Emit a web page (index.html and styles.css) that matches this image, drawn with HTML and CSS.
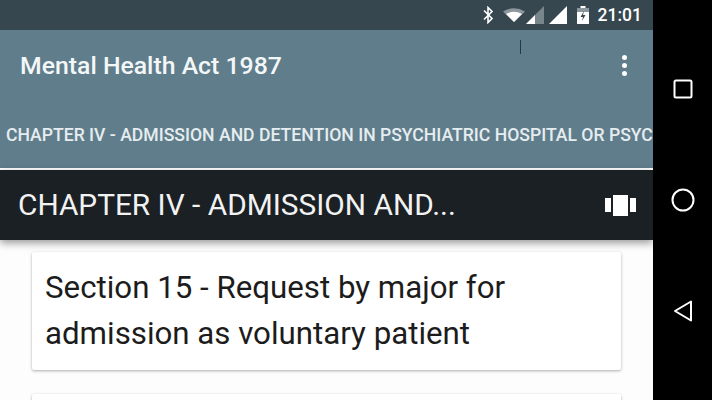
FILE: index.html
```html
<!DOCTYPE html>
<html lang="en">
<head>
<meta charset="utf-8">
<title>Mental Health Act 1987</title>
<link rel="stylesheet" href="styles.css">
</head>
<body>
<div class="device">
  <main class="screen">
    <div class="status">
      <svg class="ic-bt" viewBox="0 0 12 18" width="12" height="18"><path d="M2 4.500l8 8-4 4V1.500l4 4-8 8" fill="none" stroke="#fff" stroke-width="1.600"/></svg>
      <svg class="ic-wifi" viewBox="0 0 22 14" width="22" height="14"><path d="M0 3.500Q11-3 22 3.500L11 14Z" fill="#8b979c"/><path d="M3 6Q11 1.500 19 6L11 14Z" fill="#fff"/></svg>
      <svg class="ic-sig" viewBox="0 0 18 18" width="18" height="18"><path d="M0 18L18 0V18Z" fill="#78868c"/><path d="M0 18L9 9V18Z" fill="#fff"/></svg>
      <svg class="ic-sig2" viewBox="0 0 18 18" width="18" height="18"><path d="M0 18L18 0V18Z" fill="#fff"/></svg>
      <svg class="ic-bat" viewBox="0 0 12 18" width="12" height="18"><path d="M3.500 0h5v2H12v16H0V2h3.500z" fill="#fff"/><path d="M0 2h12v4H0z" fill="#8b979c"/><path d="M7 5L3.500 11h2.500L5 15l3.500-6H6z" fill="#37474f"/></svg>
      <span class="time">21:01</span>
    </div>
    <header class="appbar">
      <div class="toolbar">
        <h1 class="title">Mental Health Act 1987</h1>
        <span class="cursor"></span>
        <div class="menu"><i></i><i></i><i></i></div>
      </div>
      <div class="tab">CHAPTER IV - ADMISSION AND DETENTION IN PSYCHIATRIC HOSPITAL OR PSYCHIATRIC NURSING HOME</div>
      <div class="tab-line"></div>
    </header>
    <div class="chapter">
      <span class="chapter-name">CHAPTER IV - ADMISSION AND...</span>
      <svg class="carousel" viewBox="0 0 31 22" width="31" height="22"><path d="M0 4h6v14H0zM8 1h15v21H8zM25 4h6v14h-6z" fill="#fff"/></svg>
    </div>
    <div class="list">
      <article class="card">Section 15 - Request by major for admission as voluntary patient</article>
      <article class="card next"></article>
    </div>
  </main>
  <nav class="nav">
    <svg viewBox="0 0 24 24" width="24" height="24"><rect x="3.500" y="3.500" width="17" height="17" rx="1.500" fill="none" stroke="#fff" stroke-width="2"/></svg>
    <svg viewBox="0 0 26 26" width="26" height="26"><circle cx="13" cy="13" r="10.500" fill="none" stroke="#fff" stroke-width="2"/></svg>
    <svg viewBox="0 0 24 24" width="24" height="24"><path d="M20 2.500V21.500L4 12Z" fill="none" stroke="#fff" stroke-width="2" stroke-linejoin="round"/></svg>
  </nav>
</div>
</body>
</html>
```

FILE: styles.css
```css
* { box-sizing: border-box; }
html, body { margin: 0; padding: 0; }
body { width: 712px; height: 400px; overflow: hidden; background: #000; font-family: Roboto, "Liberation Sans", sans-serif; }
.device { display: flex; width: 712px; height: 400px; }
.screen { width: 653px; height: 400px; display: flex; flex-direction: column; overflow: hidden; background: #fdfdfd; }
.status { height: 30px; flex: none; background: #37474f; display: flex; align-items: center; justify-content: flex-end; padding-right: 11px; color: #fff; }
.status svg { flex: none; }
.ic-bt { margin-right: 9px; }
.ic-wifi { margin-right: 1px; }
.ic-sig { margin-right: 5px; }
.ic-sig2 { margin-right: 10px; }
.ic-bat { margin-right: 9px; }
.time { font-size: 17.500px; font-weight: 500; line-height: 30px; }
.appbar { background: #607d8b; height: 140px; flex: none; display: flex; flex-direction: column; }
.toolbar { height: 70px; flex: none; display: flex; align-items: center; justify-content: space-between; padding: 2px 26px 0 20px; position: relative; }
.title { margin: 0; font-size: 24.800px; font-weight: 500; color: #f4f7f8; line-height: 68px; }
.cursor { position: absolute; left: 520px; top: 10px; width: 1px; height: 14px; background: #1f3a4a; }
.menu { display: flex; flex-direction: column; gap: 3px; margin-top: -2px; }
.menu i { display: block; width: 5px; height: 5px; border-radius: 50%; background: #fff; }
.tab { height: 68px; flex: none; padding: 23px 0 0 6px; font-size: 17.600px; font-weight: 500; line-height: 24px; color: #e6edf0; white-space: nowrap; overflow: hidden; }
.tab-line { height: 2px; flex: none; background: #fff; }
.chapter { height: 70px; flex: none; background: #1b2024; display: flex; align-items: center; justify-content: space-between; padding: 0 17px 2px 18px; box-shadow: 0 3px 8px rgba(0,0,0,.4); position: relative; z-index: 1; }
.chapter-name { font-size: 29.800px; color: #f2f2f2; white-space: nowrap; }
.carousel { margin-top: 2px; }
.list { flex: 1; display: flex; flex-direction: column; gap: 24px; padding: 12px 32px 0; }
.card { flex: none; height: 118px; width: 589px; padding: 13px 13px 0; background: #fff; border-radius: 2px; box-shadow: 0 1px 3px rgba(0,0,0,.32); font-size: 31.250px; line-height: 46px; color: #1c1c1c; }
.next { height: 40px; }
.nav { width: 59px; height: 400px; background: #000; display: flex; flex-direction: column; align-items: center; justify-content: space-between; padding: 77px 0 77px; }
```
